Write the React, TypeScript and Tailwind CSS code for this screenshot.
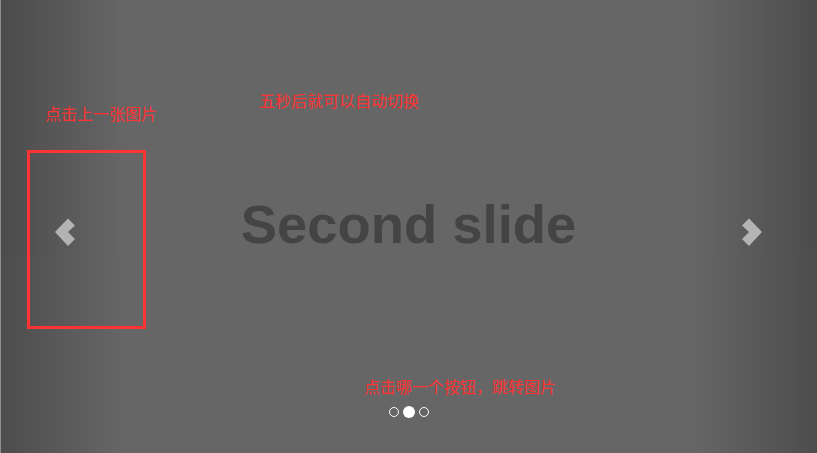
import React from 'react'

const Chevron = ({ dir }: { dir: 'left' | 'right' }) => {
    const points = dir === 'left'
        ? '1,15 14,1.5 21,8.5 14,15 21,22 14,29'
        : '21,15 8,1.5 1,8.5 8,15 1,22 8,29'
    return (
        <svg width="22" height="30" viewBox="0 0 22 30">
            <polygon points={points} fill="#ffffff" />
        </svg>
    )
}

const App = () => {
    const indicators = [false, true, false]

    return (
        <div className="relative w-[817px] h-[453px] overflow-hidden bg-[#666666] border-l border-[#8f8f8f] font-['Liberation_Sans',Arial,sans-serif]">
            {/* slide */}
            <div className="w-full h-full flex items-center justify-center">
                <span className="text-[54.4px] font-bold leading-none text-[#444444] -mt-[2px] -ml-[1px]">Second slide</span>
            </div>

            {/* controls */}
            <div className="absolute left-0 top-0 bottom-0 w-[15%] opacity-50 flex items-center justify-center bg-[linear-gradient(to_right,rgba(0,0,0,0.5),rgba(0,0,0,0.0001))]">
                <div className="translate-x-[3px] translate-y-[5px]">
                    <Chevron dir="left" />
                </div>
            </div>
            <div className="absolute right-0 top-0 bottom-0 w-[15%] opacity-50 flex items-center justify-center bg-[linear-gradient(to_left,rgba(0,0,0,0.5),rgba(0,0,0,0.0001))]">
                <div className="-translate-x-[4px] translate-y-[5px]">
                    <Chevron dir="right" />
                </div>
            </div>

            {/* indicators */}
            <ol className="absolute left-0 right-0 bottom-[35px] flex items-center justify-center gap-[4px]">
                {indicators.map((active, i) => (
                    <li
                        key={i}
                        className={active
                            ? "w-[12px] h-[12px] rounded-full bg-white"
                            : "w-[10px] h-[10px] rounded-full border border-white"}
                    />
                ))}
            </ol>

            {/* annotations */}
            <div className="absolute left-[26px] top-[150px] w-[119px] h-[179px] border-[3px] border-[#ff3333]" />
            <div className="absolute left-[44px] top-[105px] text-[16px] leading-none text-[#ff3333] font-['Noto_Sans_CJK_SC',sans-serif]">点击上一张图片</div>
            <div className="absolute left-[258px] top-[92px] text-[16px] leading-none text-[#ff3333] font-['Noto_Sans_CJK_SC',sans-serif]">五秒后就可以自动切换</div>
            <div className="absolute left-[363px] top-[378px] text-[16px] leading-none text-[#ff3333] font-['Noto_Sans_CJK_SC',sans-serif]">点击哪一个按钮，跳转图片</div>
        </div>
    )
}

export default App
